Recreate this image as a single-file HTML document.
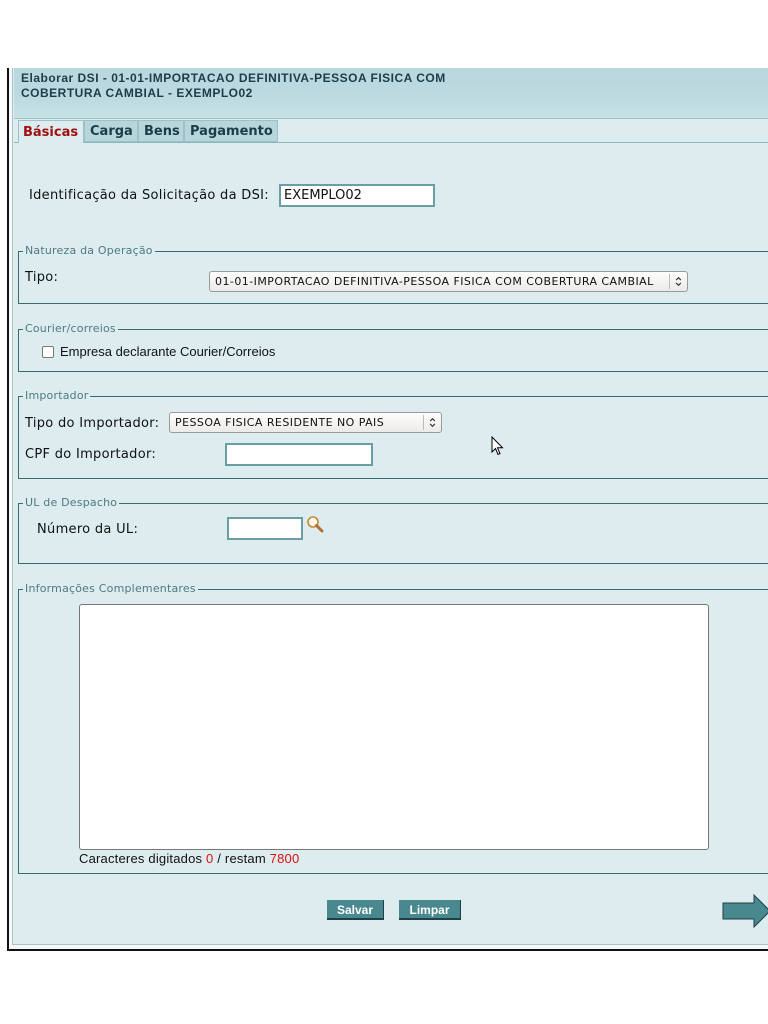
<!DOCTYPE html>
<html><head><meta charset="utf-8"><style>
*{margin:0;padding:0;box-sizing:border-box}
body{width:768px;height:1024px;background:#fff;position:relative;overflow:hidden;font-family:"DejaVu Sans",Verdana,sans-serif;font-size:13px;color:#111}
.a{position:absolute}
.lb{letter-spacing:0.3px}
.fs{position:absolute;left:18px;width:800px;border:1px solid #3d6a70;border-right:none}
.lg{position:absolute;top:-8px;left:4px;background:#ddecef;padding:0 2px;font-size:11px;color:#4e7a80;line-height:14px;letter-spacing:0.2px}
.inp{position:absolute;background:#fff;border:2px solid #6a9ea4}
.sel{position:absolute;background:linear-gradient(#fdfdfd,#ecebea);border:1px solid #9a9a9a;border-radius:3px;font-size:11px;letter-spacing:0.45px;line-height:19px;padding-left:5px;color:#111}
.sel svg{position:absolute;right:0;top:2px;height:15px;width:18px;border-left:1px solid #bbb}
.btn{position:absolute;background:#4a8890;color:#fff;font-family:"Liberation Sans",Arial,sans-serif;font-weight:bold;font-size:12px;text-align:center;line-height:21px;border-bottom:2px solid #1f4045;border-right:1px solid #1f4045}
</style></head><body>
<div class="a" style="left:7px;top:68px;width:2px;height:883px;background:#111"></div>
<div class="a" style="left:7px;top:949px;width:761px;height:2px;background:#111"></div>
<div class="a" style="left:9px;top:68px;width:759px;height:881px;background:#f4f8f9"></div>
<div class="a" style="left:12px;top:68px;width:756px;height:877px;background:#ddecef;border-left:1px solid #a8c4c8;border-bottom:1px solid #a8c4c8"></div>
<div class="a" style="left:14px;top:68px;width:754px;height:51px;background:linear-gradient(#b9d8dd,#bcdadf 60%,#c8e2e6);border-bottom:1px solid #9ec1c6"></div>
<div class="a" style="left:21px;top:71px;font-family:'Liberation Sans',Arial,sans-serif;font-weight:bold;font-size:12px;line-height:15px;color:#1c3c4a;letter-spacing:0.5px">Elaborar DSI - 01-01-IMPORTACAO DEFINITIVA-PESSOA FISICA COM<br>COBERTURA CAMBIAL - EXEMPLO02</div>
<div class="a" style="left:14px;top:142px;width:754px;height:1px;background:#8fb5ba"></div>
<div class="a" style="left:18px;top:120px;width:66px;height:23px;background:#ddecef;border:1px solid #9ec1c6;border-bottom:none;font-weight:bold;color:#a01010;font-size:13px;line-height:23px;padding-left:4px">Básicas</div>
<div class="a" style="left:84px;top:120px;width:54px;height:22px;background:#b7d6db;border:1px solid #9ec1c6;font-weight:bold;color:#1c3c4a;line-height:22px;padding-left:5px">Carga</div>
<div class="a" style="left:138px;top:120px;width:46px;height:22px;background:#b7d6db;border:1px solid #9ec1c6;font-weight:bold;color:#1c3c4a;line-height:22px;padding-left:5px">Bens</div>
<div class="a" style="left:184px;top:120px;width:94px;height:22px;background:#b7d6db;border:1px solid #9ec1c6;font-weight:bold;color:#1c3c4a;line-height:22px;padding-left:5px">Pagamento</div>

<div class="a lb" style="left:29px;top:188px">Identificação da Solicitação da DSI:</div>
<div class="inp" style="left:279px;top:184px;width:156px;height:23px;font-size:13px;line-height:19px;padding-left:3px">EXEMPLO02</div>

<div class="fs" style="top:251px;height:53px"><div class="lg">Natureza da Operação</div></div>
<div class="a lb" style="left:25px;top:270px">Tipo:</div>
<div class="sel" style="left:209px;top:271px;width:479px;height:21px">01-01-IMPORTACAO DEFINITIVA-PESSOA FISICA COM COBERTURA CAMBIAL<svg viewBox="0 0 18 15"><path d="M6.5 6 L9 3.5 L11.5 6 M6.5 9 L9 11.5 L11.5 9" fill="none" stroke="#333" stroke-width="1.2"/></svg></div>

<div class="fs" style="top:329px;height:43px"><div class="lg">Courier/correios</div></div>
<div class="a" style="left:42px;top:346px;width:12px;height:12px;border:1px solid #777;background:#fff;border-radius:2px"></div>
<div class="a" style="left:60px;top:344px;font-family:'Liberation Sans',Arial,sans-serif;font-size:13px">Empresa declarante Courier/Correios</div>

<div class="fs" style="top:396px;height:83px"><div class="lg">Importador</div></div>
<div class="a lb" style="left:25px;top:416px">Tipo do Importador:</div>
<div class="sel" style="left:169px;top:412px;width:273px;height:21px">PESSOA FISICA RESIDENTE NO PAIS<svg viewBox="0 0 18 15"><path d="M6.5 6 L9 3.5 L11.5 6 M6.5 9 L9 11.5 L11.5 9" fill="none" stroke="#333" stroke-width="1.2"/></svg></div>
<div class="a lb" style="left:25px;top:447px">CPF do Importador:</div>
<div class="inp" style="left:225px;top:443px;width:148px;height:23px"></div>
<svg class="a" style="left:491px;top:436px" width="14" height="22" viewBox="0 0 14 22"><path d="M1 1 L1 16 L4.5 12.5 L7 18.5 L9 17.5 L6.5 11.8 L11.5 11.8 Z" fill="#fff" stroke="#000" stroke-width="1"/></svg>

<div class="fs" style="top:503px;height:61px"><div class="lg">UL de Despacho</div></div>
<div class="a lb" style="left:37px;top:522px">Número da UL:</div>
<div class="inp" style="left:227px;top:517px;width:76px;height:23px"></div>
<svg class="a" style="left:306px;top:515px" width="18" height="18" viewBox="0 0 18 18"><circle cx="7" cy="7" r="5" fill="#fff6e6" stroke="#c08a40" stroke-width="1.6"/><path d="M10.5 10.5 L16 16" stroke="#b07030" stroke-width="3" stroke-linecap="round"/></svg>

<div class="fs" style="top:589px;height:285px"><div class="lg">Informações Complementares</div></div>
<div class="a" style="left:79px;top:604px;width:630px;height:246px;background:#fff;border:1px solid #777;border-radius:3px"></div>
<div class="a" style="left:79px;top:851px;font-family:'Liberation Sans',Arial,sans-serif;font-size:13px;letter-spacing:0.2px">Caracteres digitados <span style="color:#e01010">0</span> / restam <span style="color:#e01010">7800</span></div>

<div class="btn" style="left:327px;top:900px;width:57px;height:20px">Salvar</div>
<div class="btn" style="left:399px;top:900px;width:62px;height:20px">Limpar</div>
<svg class="a" style="left:722px;top:894px" width="46" height="34" viewBox="0 0 46 34"><path d="M1 9 L32 9 L32 1 L48 17 L32 33 L32 25 L1 25 Z" fill="#4a8890" stroke="#1f4045" stroke-width="1"/></svg>
</body></html>
